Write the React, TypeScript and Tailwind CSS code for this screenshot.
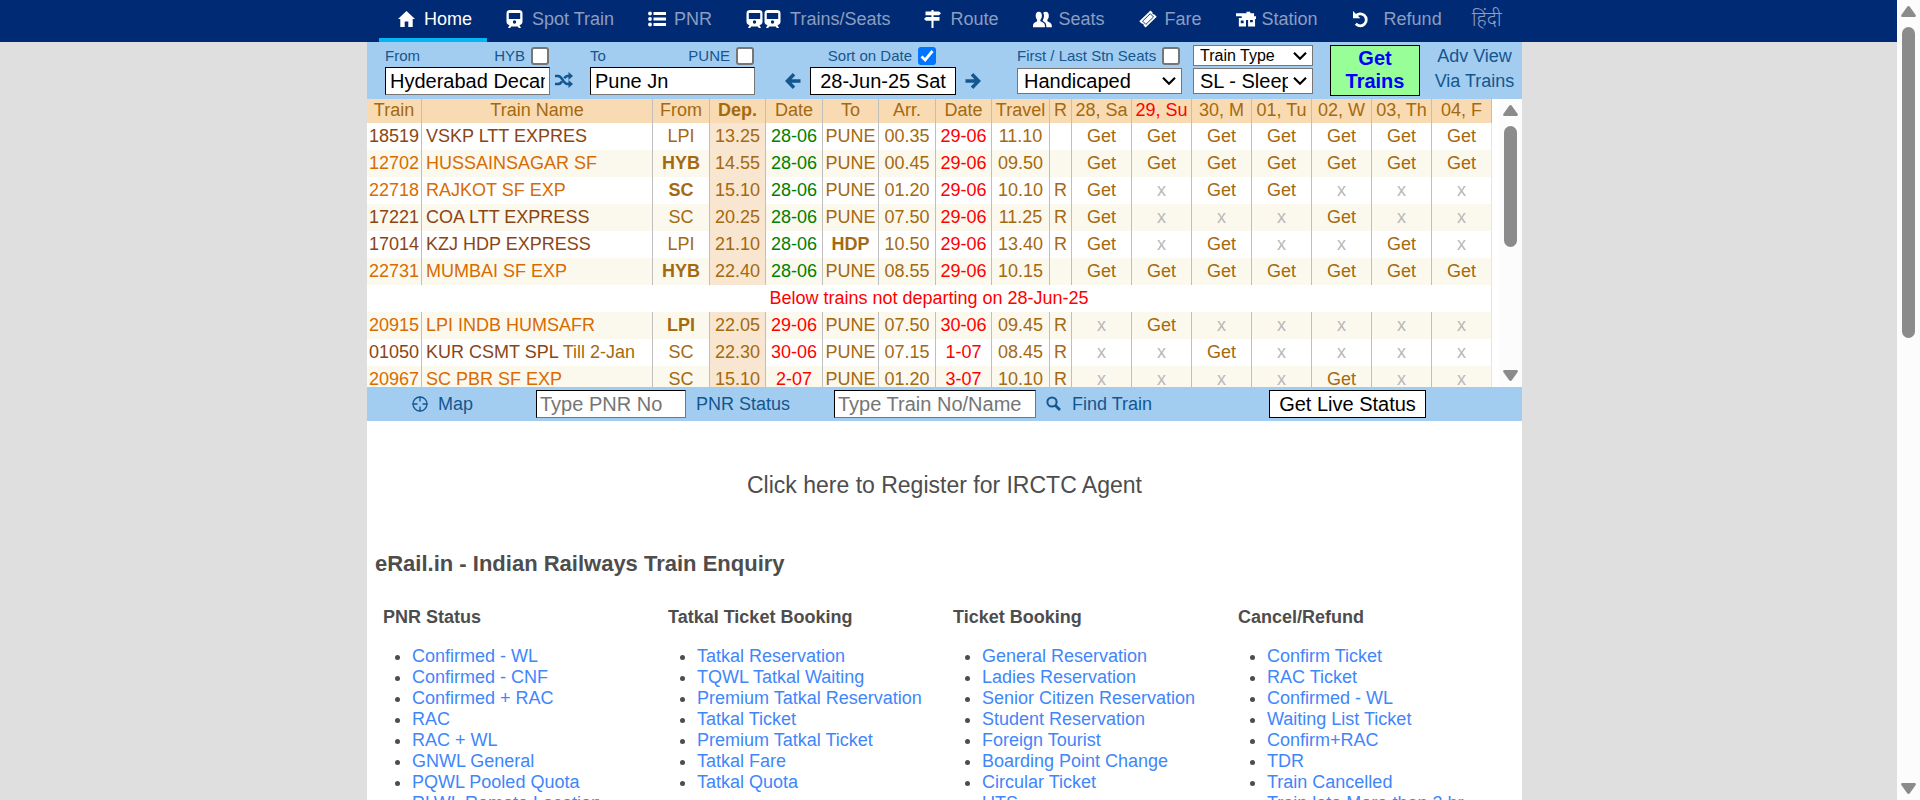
import React from "react";

type IconProps = { className?: string };

const HomeIcon = () => (
  <svg viewBox="0 0 17 16" className="h-4 w-[17px]" fill="currentColor">
    <path d="M8.500 0 L17 8 L14.700 8 L14.700 16 L10.300 16 L10.300 10.500 L6.700 10.500 L6.700 16 L2.300 16 L2.300 8 L0 8 L5 3.300 L8.500 0Z" />
  </svg>
);

const TrainIcon = ({ className = "" }: IconProps) => (
  <svg viewBox="0 0 17 18" className={`h-[18px] w-[17px] ${className}`}>
    <path
      fill="currentColor"
      fillRule="evenodd"
      d="M4 0h9c2 0 3.500 1.200 3.500 3.200v8.600c0 2-1.300 3.200-3 3.200l1.500 3h-2.200l-1-1.500H5.200l-1 1.500H2l1.500-3c-1.700 0-3-1.200-3-3.200V3.200C.5 1.200 2 0 4 0Zm-1.200 3v6h11.400V3H2.800Zm5.700 7.300a1.700 1.700 0 1 0 0 3.400a1.700 1.700 0 0 0 0-3.400Z"
    />
  </svg>
);

const ListIcon = () => (
  <svg viewBox="0 0 18 16" className="h-4 w-[18px]" fill="currentColor">
    <circle cx="2" cy="2.500" r="1.900" />
    <circle cx="2" cy="8" r="1.900" />
    <circle cx="2" cy="13.500" r="1.900" />
    <path d="M5.500 1H18v3H5.500zM5.500 6.500H18v3H5.500zM5.500 12H18v3H5.500z" />
  </svg>
);

const SignIcon = () => (
  <svg viewBox="0 0 17 18" className="h-[18px] w-[17px]" fill="currentColor">
    <path d="M7.500 0h2v1.500H15L17 3.300L15 5.200H9.500V7H15.500v3.700H9.500V18h-2V10.700H2L0 8.900L2 7H7.500V5.200H1.500V1.500H7.500z" />
  </svg>
);

const PeopleIcon = () => (
  <svg viewBox="0 0 19 17" className="h-[17px] w-[19px]" fill="currentColor">
    <path d="M5.800 .8C8 .8 9 2.600 8.900 5c0 1.700-.8 2.900-1.500 3.700v1.500c1.200.8 3.300 1.300 4 2.500c.5.900.6 2.300.6 3.500H0c0-1.200 0-2.600.5-3.500c.7-1.200 2.500-1.700 3.600-2.500V8.700C3.400 7.900 2.800 6.700 2.700 5C2.600 2.600 3.600 .8 5.800 .8Z" />
    <path d="M12.800 .8c2.200 0 3.100 1.800 3 4.200c0 1.700-.7 2.900-1.400 3.700v1.500c1.100.8 3 1.300 3.800 2.500c.5.900.7 2.300.7 3.500h-5.600c0-1.500-.1-3-.7-4c-.7-1-1.800-1.500-2.800-2.100V9c.8-1.200 1.200-2.500 1.200-4c0-1.200-.2-2.300-.8-3.200c.6-.6 1.500-1 2.600-1Z" />
  </svg>
);

const TicketIcon = () => (
  <svg viewBox="0 0 18 18" className="h-[18px] w-[18px]">
    <path
      fill="currentColor"
      d="M11.500 .5l2 2a1.600 1.600 0 0 0 2 2l2.200 2.200L6.600 17.500l-2-2a1.600 1.600 0 0 0-2-2L.3 11.300L11.500 .5Z"
    />
    <path d="M11.300 3.700L14.500 7L6.800 14.400L3.600 11.100Z" fill="none" stroke="#002b74" strokeWidth=".9" />
  </svg>
);

const StationIcon = () => (
  <svg viewBox="0 0 21 16" className="h-4 w-5">
    <path
      fill="currentColor"
      fillRule="evenodd"
      d="M0 2h11V.5h4V2h4v3h2v3h-1v8H3V7h3V5H0ZM5 9.500v3H8v-3ZM10.500 9v7H12.700V9ZM14.700 9v2.500h3V9Z"
    />
  </svg>
);

const RefundIcon = () => (
  <svg viewBox="0 0 17 17" className="h-[17px] w-[17px]" fill="none">
    <path d="M3.500 5.200A6 6 0 1 1 3.800 12.800" stroke="currentColor" strokeWidth="2.800" />
    <path d="M1 0V7.300H8.300Z" fill="currentColor" />
  </svg>
);

const ShuffleIcon = () => (
  <svg viewBox="0 0 18 16" className="h-4 w-[18px]">
    <path
      d="M0 4h3.200c1.800 0 2.900 1.300 4.300 3.600C9.300 10.600 10.500 12 12.500 12H15M0 12h3.200c1.700 0 2.700-1 3.800-2.600M9.300 6.300C10.200 4.900 11.100 4 12.500 4H15"
      fill="none"
      stroke="currentColor"
      strokeWidth="2.600"
    />
    <path d="M13.500 0L18 4L13.500 8ZM13.500 8L18 12L13.500 16Z" fill="currentColor" />
  </svg>
);

const ArrowIcon = ({ className = "" }: IconProps) => (
  <svg viewBox="0 0 16 16" className={`h-4 w-4 ${className}`} fill="none" stroke="currentColor" strokeWidth="3.400">
    <path d="M9 1.200L2.400 8L9 14.800M3 8H15.500" />
  </svg>
);

const TargetIcon = () => (
  <svg viewBox="0 0 16 16" className="h-4 w-4" fill="none" stroke="currentColor" strokeWidth="1.300">
    <circle cx="8" cy="8" r="7" />
    <path d="M8 0.500V5.500M8 10.500V15.500M0.500 8H5.500M10.500 8H15.500" />
  </svg>
);

const SearchIcon = () => (
  <svg viewBox="0 0 15 15" className="h-[15px] w-[15px]" fill="none" stroke="currentColor">
    <circle cx="6" cy="6" r="4.600" strokeWidth="2" />
    <path d="M9.200 9.200L14 14" strokeWidth="2.800" />
  </svg>
);

const ChevronIcon = () => (
  <svg
    viewBox="0 0 14 9"
    className="pointer-events-none absolute top-1/2 right-1.5 h-[9px] w-3.5 -translate-y-1/2"
    fill="none"
    stroke="#000"
    strokeWidth="2.200"
  >
    <path d="M1 1.200L7 7.200L13 1.200" />
  </svg>
);

const navItems: { label: string; icon: React.ReactNode; wide?: string }[] = [
  { label: "Home", icon: <HomeIcon /> },
  { label: "Spot Train", icon: <TrainIcon /> },
  { label: "PNR", icon: <ListIcon /> },
  {
    label: "Trains/Seats",
    icon: (
      <span className="flex gap-px">
        <TrainIcon />
        <TrainIcon />
      </span>
    ),
    wide: "w-11",
  },
  { label: "Route", icon: <SignIcon /> },
  { label: "Seats", icon: <PeopleIcon /> },
  { label: "Fare", icon: <TicketIcon /> },
  { label: "Station", icon: <StationIcon /> },
  { label: "Refund", icon: <RefundIcon />, wide: "w-8" },
];

function NavBar() {
  return (
    <nav className="bg-[#002b74] pr-2 text-[#8c9dc0]">
      <div className="mx-auto flex h-[42px] w-full max-w-[1155px] pl-3">
        {navItems.map((item, i) => (
          <a
            key={item.label}
            href="#"
            className={`flex items-center border-b-4 pr-[15px] pl-[19px] whitespace-nowrap ${
              i === 0 ? "border-[#03b5f4] text-white" : "border-transparent"
            }`}
          >
            <span className={`shrink-0 text-white ${item.wide ?? "w-[26px]"}`}>{item.icon}</span>
            {item.label}
          </a>
        ))}
        <a href="#" lang="hi" className="flex items-center border-b-4 border-transparent pl-[15px] text-xl font-light">
          हिंदी
        </a>
      </div>
    </nav>
  );
}

const checkboxClass =
  "h-[18px] w-[18px] appearance-none rounded-[3px] border-2 border-[#767676] bg-white";

function StationField({ id, label, code, value }: { id: string; label: string; code: string; value: string }) {
  return (
    <div className="w-[165px]">
      <div className="flex h-[22px] items-center justify-between pr-px text-[15px]">
        <label htmlFor={id}>{label}</label>
        <label className="flex items-center gap-1.5">
          {code}
          <input type="checkbox" className={checkboxClass} />
        </label>
      </div>
      <input
        id={id}
        type="text"
        defaultValue={value}
        className="h-7 w-full border border-t-black border-r-[#767676] border-b-[#767676] border-l-black bg-white px-1 text-xl text-black"
      />
    </div>
  );
}

function SelectBox({ label, option, small }: { label: string; option: string; small?: boolean }) {
  return (
    <div className="relative">
      <select
        aria-label={label}
        className={`block w-full appearance-none border border-[#767676] bg-white text-black ${
          small ? "h-[21px] pl-1.5 text-base leading-[19px]" : "h-[26px] pr-6 pl-1.5 text-xl leading-6"
        }`}
      >
        <option>{option}</option>
      </select>
      <ChevronIcon />
    </div>
  );
}

function SearchPanel() {
  return (
    <form className="flex h-[57px] items-start bg-[#a3cdf0] pt-[3px] pl-[18px] text-[#14568f]" onSubmit={(e) => e.preventDefault()}>
      <StationField id="from" label="From" code="HYB" value="Hyderabad Decan" />
      <button type="button" aria-label="Swap stations" className="mt-[27px] w-10 pl-[5px]">
        <ShuffleIcon />
      </button>
      <StationField id="to" label="To" code="PUNE" value="Pune Jn" />
      <div className="ml-[30px] w-[196px]">
        <label className="flex h-[22px] items-center justify-end gap-1.5 pr-[45px] text-[15px]">
          Sort on Date
          <span className="relative h-[18px] w-[18px]">
            <input
              type="checkbox"
              defaultChecked
              className="block h-[18px] w-[18px] appearance-none rounded-[3px] bg-[#0075ff]"
            />
            <svg viewBox="0 0 18 18" className="pointer-events-none absolute inset-0" fill="none" stroke="#fff" strokeWidth="2.800">
              <path d="M3.500 9.500L7.200 13L14.500 4" />
            </svg>
          </span>
        </label>
        <div className="flex items-center justify-between">
          <button type="button" aria-label="Previous day">
            <ArrowIcon />
          </button>
          <button type="button" className="h-7 w-[146px] border border-black bg-white text-xl leading-6 text-black">
            28-Jun-25 Sat
          </button>
          <button type="button" aria-label="Next day">
            <ArrowIcon className="rotate-180" />
          </button>
        </div>
      </div>
      <div className="ml-9 w-[165px]">
        <label className="mb-px flex h-[22px] items-center justify-between pr-0.5 text-[15px] whitespace-nowrap">
          First / Last Stn Seats
          <input type="checkbox" className={checkboxClass} />
        </label>
        <SelectBox label="Quota" option="Handicaped" />
      </div>
      <div className="ml-[11px] flex w-[120px] flex-col gap-0.5">
        <SelectBox label="Train type" option="Train Type" small />
        <SelectBox label="Class" option="SL - Sleeper" />
      </div>
      <button
        type="submit"
        className="ml-[17px] h-[51px] w-[90px] border border-black bg-[#98ff98] pb-0.5 text-xl leading-[23px] font-bold text-[#0000ff]"
      >
        Get
        <br />
        Trains
      </button>
      <div className="flex flex-1 flex-col pl-[7px] text-center leading-[25px]">
        <a href="#" className="-mt-px">
          Adv View
        </a>
        <a href="#">Via Trains</a>
      </div>
    </form>
  );
}

const dayHeads = ["28, Sa", "29, Su", "30, M", "01, Tu", "02, W", "03, Th", "04, F"];

type Train = {
  no: string;
  name: string;
  note?: string;
  fast?: boolean;
  from: string;
  fromBold?: boolean;
  dep: string;
  d1: string;
  to: string;
  arr: string;
  d2: string;
  travel: string;
  r?: boolean;
  days: string;
};

const departing: Train[] = [
  { no: "18519", name: "VSKP LTT EXPRES", from: "LPI", dep: "13.25", d1: "28-06", to: "PUNE", arr: "00.35", d2: "29-06", travel: "11.10", days: "1111111" },
  { no: "12702", name: "HUSSAINSAGAR SF", fast: true, from: "HYB", fromBold: true, dep: "14.55", d1: "28-06", to: "PUNE", arr: "00.45", d2: "29-06", travel: "09.50", days: "1111111" },
  { no: "22718", name: "RAJKOT SF EXP", fast: true, from: "SC", fromBold: true, dep: "15.10", d1: "28-06", to: "PUNE", arr: "01.20", d2: "29-06", travel: "10.10", r: true, days: "1011000" },
  { no: "17221", name: "COA LTT EXPRESS", from: "SC", dep: "20.25", d1: "28-06", to: "PUNE", arr: "07.50", d2: "29-06", travel: "11.25", r: true, days: "1000100" },
  { no: "17014", name: "KZJ HDP EXPRESS", from: "LPI", dep: "21.10", d1: "28-06", to: "HDP", arr: "10.50", d2: "29-06", travel: "13.40", r: true, days: "1010010" },
  { no: "22731", name: "MUMBAI SF EXP", fast: true, from: "HYB", fromBold: true, dep: "22.40", d1: "28-06", to: "PUNE", arr: "08.55", d2: "29-06", travel: "10.15", days: "1111111" },
];

const notDeparting: Train[] = [
  { no: "20915", name: "LPI INDB HUMSAFR", fast: true, from: "LPI", fromBold: true, dep: "22.05", d1: "29-06", to: "PUNE", arr: "07.50", d2: "30-06", travel: "09.45", r: true, days: "0100000" },
  { no: "01050", name: "KUR CSMT SPL", note: "Till 2-Jan", from: "SC", dep: "22.30", d1: "30-06", to: "PUNE", arr: "07.15", d2: "1-07", travel: "08.45", r: true, days: "0010000" },
  { no: "20967", name: "SC PBR SF EXP", fast: true, from: "SC", dep: "15.10", d1: "2-07", to: "PUNE", arr: "01.20", d2: "3-07", travel: "10.10", r: true, days: "0000100" },
];

const cell = "border-r border-[#bfbfbf] px-0 pt-0 pb-0.5";

function TrainRow({ t }: { t: Train }) {
  const nameColor = t.fast ? "text-[#d86c00]" : "text-[#8b4513]";
  return (
    <tr className="h-[27px] even:bg-[#fbf8ee]">
      <td className={`${cell} ${nameColor}`}>{t.no}</td>
      <td className={`border-r border-[#bfbfbf] pt-0 pr-0 pb-0.5 pl-1 text-left ${nameColor}`}>
        {t.name}
        {t.note && <span className="text-[#a5690f]"> {t.note}</span>}
      </td>
      <td className={`${cell} ${t.fromBold ? "font-bold" : ""}`}>{t.from}</td>
      <td className={`${cell} bg-[#f9e6d0]`}>{t.dep}</td>
      <td className={`${cell} ${t.d1 === "28-06" ? "text-[#008000]" : "text-[#ff0000]"}`}>{t.d1}</td>
      <td className={`${cell} ${t.to === "HDP" ? "font-bold" : ""}`}>{t.to}</td>
      <td className={cell}>{t.arr}</td>
      <td className={`${cell} text-[#ff0000]`}>{t.d2}</td>
      <td className={cell}>{t.travel}</td>
      <td className={cell}>{t.r ? "R" : ""}</td>
      {dayHeads.map((d, i) => (
        <td key={d} className="border-r border-[#bfbfbf] px-0 pt-0 pb-0.5 last:border-[#e5e5e5]">
          {t.days[i] === "1" ? <a href="#">Get</a> : <span className="text-[#b8b8b8]">x</span>}
        </td>
      ))}
    </tr>
  );
}

function ScrollBar({ thumb }: { thumb: string }) {
  return (
    <div aria-hidden="true" className="flex w-[23px] shrink-0 flex-col items-center bg-[#fcfcfc] py-1.5 text-[#8b8b8b]">
      <svg viewBox="0 0 15 11" className="h-[11px] w-[15px] shrink-0" fill="currentColor">
        <path d="M7.500 0Q8.300 0 8.800 .7L14.700 9Q15.300 11 13.500 11H1.500Q-.3 11 .3 9L6.200 .7Q6.700 0 7.500 0Z" />
      </svg>
      <div className={`mt-2.5 w-[13px] rounded-full bg-[#8b8b8b] ${thumb}`} />
      <svg viewBox="0 0 15 11" className="mt-auto h-[11px] w-[15px] shrink-0 rotate-180" fill="currentColor">
        <path d="M7.500 0Q8.300 0 8.800 .7L14.700 9Q15.300 11 13.500 11H1.500Q-.3 11 .3 9L6.200 .7Q6.700 0 7.500 0Z" />
      </svg>
    </div>
  );
}

function TrainTable() {
  return (
    <div className="flex h-72 bg-white">
      <div className="min-w-0 flex-1 overflow-hidden">
        <table className="w-[1125px] table-fixed border-separate border-spacing-0 text-center leading-6 whitespace-nowrap text-[#a5690f]">
          <colgroup>
            <col className="w-[55px]" />
            <col className="w-[231px]" />
            <col className="w-[57px]" />
            <col className="w-[56px]" />
            <col className="w-[57px]" />
            <col className="w-[56px]" />
            <col className="w-[57px]" />
            <col className="w-[56px]" />
            <col className="w-[58px]" />
            <col className="w-[22px]" />
            {dayHeads.map((d) => (
              <col key={d} className="w-[60px]" />
            ))}
          </colgroup>
          <thead>
            <tr className="h-6 bg-[#f9dbb3]">
              {["Train", "Train Name", "From", "Dep.", "Date", "To", "Arr.", "Date", "Travel", "R", ...dayHeads].map((h, i) => (
                <th
                  key={i}
                  className={`border-r border-[#bfbfbf] px-0 pt-0 pb-0.5 leading-[22px] ${h === "Dep." ? "font-bold" : "font-normal"} ${
                    h === "29, Su" ? "text-[#ff0000]" : ""
                  }`}
                >
                  {h}
                </th>
              ))}
            </tr>
          </thead>
          <tbody>
            {departing.map((t) => (
              <TrainRow key={t.no} t={t} />
            ))}
            <tr className="h-[27px]">
              <td colSpan={17} className="border-r border-[#e5e5e5] px-0 pt-0 pb-0.5 text-[#ff0000]">
                Below trains not departing on 28-Jun-25
              </td>
            </tr>
            {notDeparting.map((t) => (
              <TrainRow key={t.no} t={t} />
            ))}
          </tbody>
        </table>
      </div>
      <ScrollBar thumb="h-[121px]" />
    </div>
  );
}

const queryInput =
  "h-7 border border-t-black border-r-[#767676] border-b-[#767676] border-l-black bg-white px-[3px] text-xl text-black placeholder:text-[#757575]";

function QueryBar() {
  return (
    <div className="flex h-[34px] items-center bg-[#a3cdf0] pb-px pl-[45px] text-[#14568f]">
      <a href="#" className="flex w-[124px] items-center gap-2.5">
        <TargetIcon />
        Map
      </a>
      <input type="text" aria-label="PNR number" placeholder="Type PNR No" className={`${queryInput} w-[150px]`} />
      <a href="#" className="w-[148px] pl-2.5">
        PNR Status
      </a>
      <input type="text" aria-label="Train number or name" placeholder="Type Train No/Name" className={`${queryInput} w-[202px]`} />
      <a href="#" className="flex w-[233px] items-center gap-[11px] pl-2.5">
        <SearchIcon />
        Find Train
      </a>
      <button type="button" className="h-7 w-[157px] border border-black bg-white text-xl leading-6 text-black">
        Get Live Status
      </button>
    </div>
  );
}

const linkColumns = [
  {
    title: "PNR Status",
    links: ["Confirmed - WL", "Confirmed - CNF", "Confirmed + RAC", "RAC", "RAC + WL", "GNWL General", "PQWL Pooled Quota", "RLWL Remote Location"],
  },
  {
    title: "Tatkal Ticket Booking",
    links: ["Tatkal Reservation", "TQWL Tatkal Waiting", "Premium Tatkal Reservation", "Tatkal Ticket", "Premium Tatkal Ticket", "Tatkal Fare", "Tatkal Quota"],
  },
  {
    title: "Ticket Booking",
    links: ["General Reservation", "Ladies Reservation", "Senior Citizen Reservation", "Student Reservation", "Foreign Tourist", "Boarding Point Change", "Circular Ticket", "UTS"],
  },
  {
    title: "Cancel/Refund",
    links: ["Confirm Ticket", "RAC Ticket", "Confirmed - WL", "Waiting List Ticket", "Confirm+RAC", "TDR", "Train Cancelled", "Train late More than 3 hr"],
  },
];

function Directory() {
  return (
    <main className="flex-1 bg-white text-[#4d4d4d]">
      <p className="pt-12 text-center text-[23px] leading-8">
        <a href="#">Click here to Register for IRCTC Agent</a>
      </p>
      <h1 className="pt-[47px] pl-2 text-[22px] leading-8 font-bold">eRail.in - Indian Railways Train Enquiry</h1>
      <div className="grid grid-cols-4 pt-[25px] pr-[3px] pl-3">
        {linkColumns.map((col) => (
          <section key={col.title} className="pl-1">
            <h2 className="leading-6 font-bold">{col.title}</h2>
            <ul className="list-disc pt-[17px] pl-[29px] leading-[21px] whitespace-nowrap">
              {col.links.map((l) => (
                <li key={l}>
                  <a href="#" className="text-[#3f86fb]">
                    {l}
                  </a>
                </li>
              ))}
            </ul>
          </section>
        ))}
      </div>
    </main>
  );
}

export default function App() {
  return (
    <div className="flex h-screen overflow-hidden font-['Liberation_Sans',Arial,'Noto_Sans',sans-serif] text-lg">
      <div className="flex min-w-0 flex-1 flex-col bg-[#dfdfdf]">
        <NavBar />
        <div className="flex min-h-0 flex-1 flex-col pr-2">
          <div className="mx-auto flex w-full max-w-[1155px] flex-1 flex-col">
            <SearchPanel />
            <TrainTable />
            <QueryBar />
            <Directory />
          </div>
        </div>
      </div>
      <ScrollBar thumb="h-[311px]" />
    </div>
  );
}
